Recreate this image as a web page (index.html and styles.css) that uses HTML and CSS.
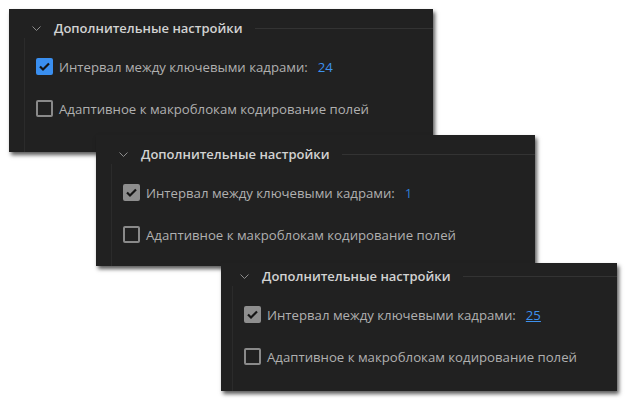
FILE: index.html
```html
<!DOCTYPE html>
<html lang="ru">
<head>
    <meta charset="UTF-8">
    <title>Дополнительные настройки</title>
    <link rel="stylesheet" href="styles.css">
</head>
<body>
  <div class="canvas">

    <div class="panel panel1">
      <div class="section">
        <div class="head">
          <svg class="chevron" width="9" height="5" viewBox="0 0 9 5"><path d="M0.5 0.5 L4.5 4.5 L8.5 0.5" fill="none" stroke="#8c8c8c" stroke-width="1"/></svg>
          <span class="title">Дополнительные настройки</span>
          <span class="rule"></span>
        </div>
        <div class="body">
          <div class="row">
            <span class="box box-blue">
              <svg width="17" height="17" viewBox="0 0 17 17"><path d="M4 8.5 L7 11.5 L13 5.5" fill="none" stroke="#151515" stroke-width="2.2"/></svg>
            </span>
            <span class="label">Интервал между ключевыми кадрами:</span>
            <span class="value">24</span>
          </div>
          <div class="row">
            <span class="box"></span>
            <span class="label">Адаптивное к макроблокам кодирование полей</span>
          </div>
        </div>
      </div>
    </div>

    <div class="panel panel2">
      <div class="section">
        <div class="head">
          <svg class="chevron" width="9" height="5" viewBox="0 0 9 5"><path d="M0.5 0.5 L4.5 4.5 L8.5 0.5" fill="none" stroke="#8c8c8c" stroke-width="1"/></svg>
          <span class="title">Дополнительные настройки</span>
          <span class="rule"></span>
        </div>
        <div class="body">
          <div class="row">
            <span class="box box-grey">
              <svg width="17" height="17" viewBox="0 0 17 17"><path d="M4 8.5 L7 11.5 L13 5.5" fill="none" stroke="#151515" stroke-width="2.2"/></svg>
            </span>
            <span class="label">Интервал между ключевыми кадрами:</span>
            <span class="value value-dim">1</span>
          </div>
          <div class="row">
            <span class="box"></span>
            <span class="label">Адаптивное к макроблокам кодирование полей</span>
          </div>
        </div>
      </div>
    </div>

    <div class="panel panel3">
      <div class="section">
        <div class="head">
          <svg class="chevron" width="9" height="5" viewBox="0 0 9 5"><path d="M0.5 0.5 L4.5 4.5 L8.5 0.5" fill="none" stroke="#8c8c8c" stroke-width="1"/></svg>
          <span class="title">Дополнительные настройки</span>
          <span class="rule"></span>
        </div>
        <div class="body">
          <div class="row">
            <span class="box box-grey">
              <svg width="17" height="17" viewBox="0 0 17 17"><path d="M4 8.5 L7 11.5 L13 5.5" fill="none" stroke="#151515" stroke-width="2.2"/></svg>
            </span>
            <span class="label">Интервал между ключевыми кадрами:</span>
            <span class="value value-link">25</span>
          </div>
          <div class="row">
            <span class="box"></span>
            <span class="label">Адаптивное к макроблокам кодирование полей</span>
          </div>
        </div>
      </div>
    </div>

  </div>
</body>
</html>
```

FILE: styles.css
```css
* {
  box-sizing: border-box;
}

body {
  margin: 0;
  background-color: #ffffff;
  font-family: "Open Sans", "Noto Sans", sans-serif;
}

.canvas {
  position: relative;
  width: 626px;
  height: 404px;
  overflow: hidden;
}

/* screenshots laid over each other like windows */
.panel {
  position: absolute;
  background-color: #212121;
  overflow: hidden;
  box-shadow: 2px 3px 4px rgba(0, 0, 0, 0.65);
}

.panel1 {
  left: 9px;
  top: 9px;
  width: 424px;
  height: 143px;
}

.panel2 {
  left: 96px;
  top: 135px;
  width: 439px;
  height: 131px;
}

.panel3 {
  left: 221px;
  top: 263px;
  width: 396px;
  height: 128px;
}

.section {
  padding-top: 9px;
}

.panel3 .section {
  margin-left: -4px;
  margin-top: -6px;
}

.head {
  display: flex;
  align-items: center;
  height: 20px;
  padding-left: 23px;
}

.chevron {
  flex: none;
  margin-right: 13px;
}

.title {
  color: #d2d2d2;
  font-size: 13px;
  font-weight: 600;
  white-space: nowrap;
}

.rule {
  flex: 1;
  height: 1px;
  margin-left: 12px;
  background-color: #333333;
}

.body {
  margin-left: 15px;
  border-left: 1px solid #2b2b2b;
  padding-top: 20px;
  padding-left: 11px;
  height: 140px;
}

.row {
  display: flex;
  align-items: center;
  height: 17px;
  margin-bottom: 25px;
}

.box {
  flex: none;
  width: 17px;
  height: 17px;
  border: 2px solid #8a8a8a;
  border-radius: 2px;
  margin-right: 6px;
  position: relative;
}

.box svg {
  position: absolute;
  left: -2px;
  top: -2px;
}

.box-blue {
  background-color: #3a8ff0;
  border-color: #3a8ff0;
}

.box-grey {
  background-color: #8e8e8e;
  border-color: #8e8e8e;
}

.label {
  color: #b0b0b0;
  font-size: 13.2px;
  white-space: nowrap;
}

.value {
  color: #3d91ee;
  font-size: 13.2px;
  margin-left: 10px;
}

.value-dim {
  color: #2f7fd8;
}

.value-link {
  text-decoration: underline;
}
```
